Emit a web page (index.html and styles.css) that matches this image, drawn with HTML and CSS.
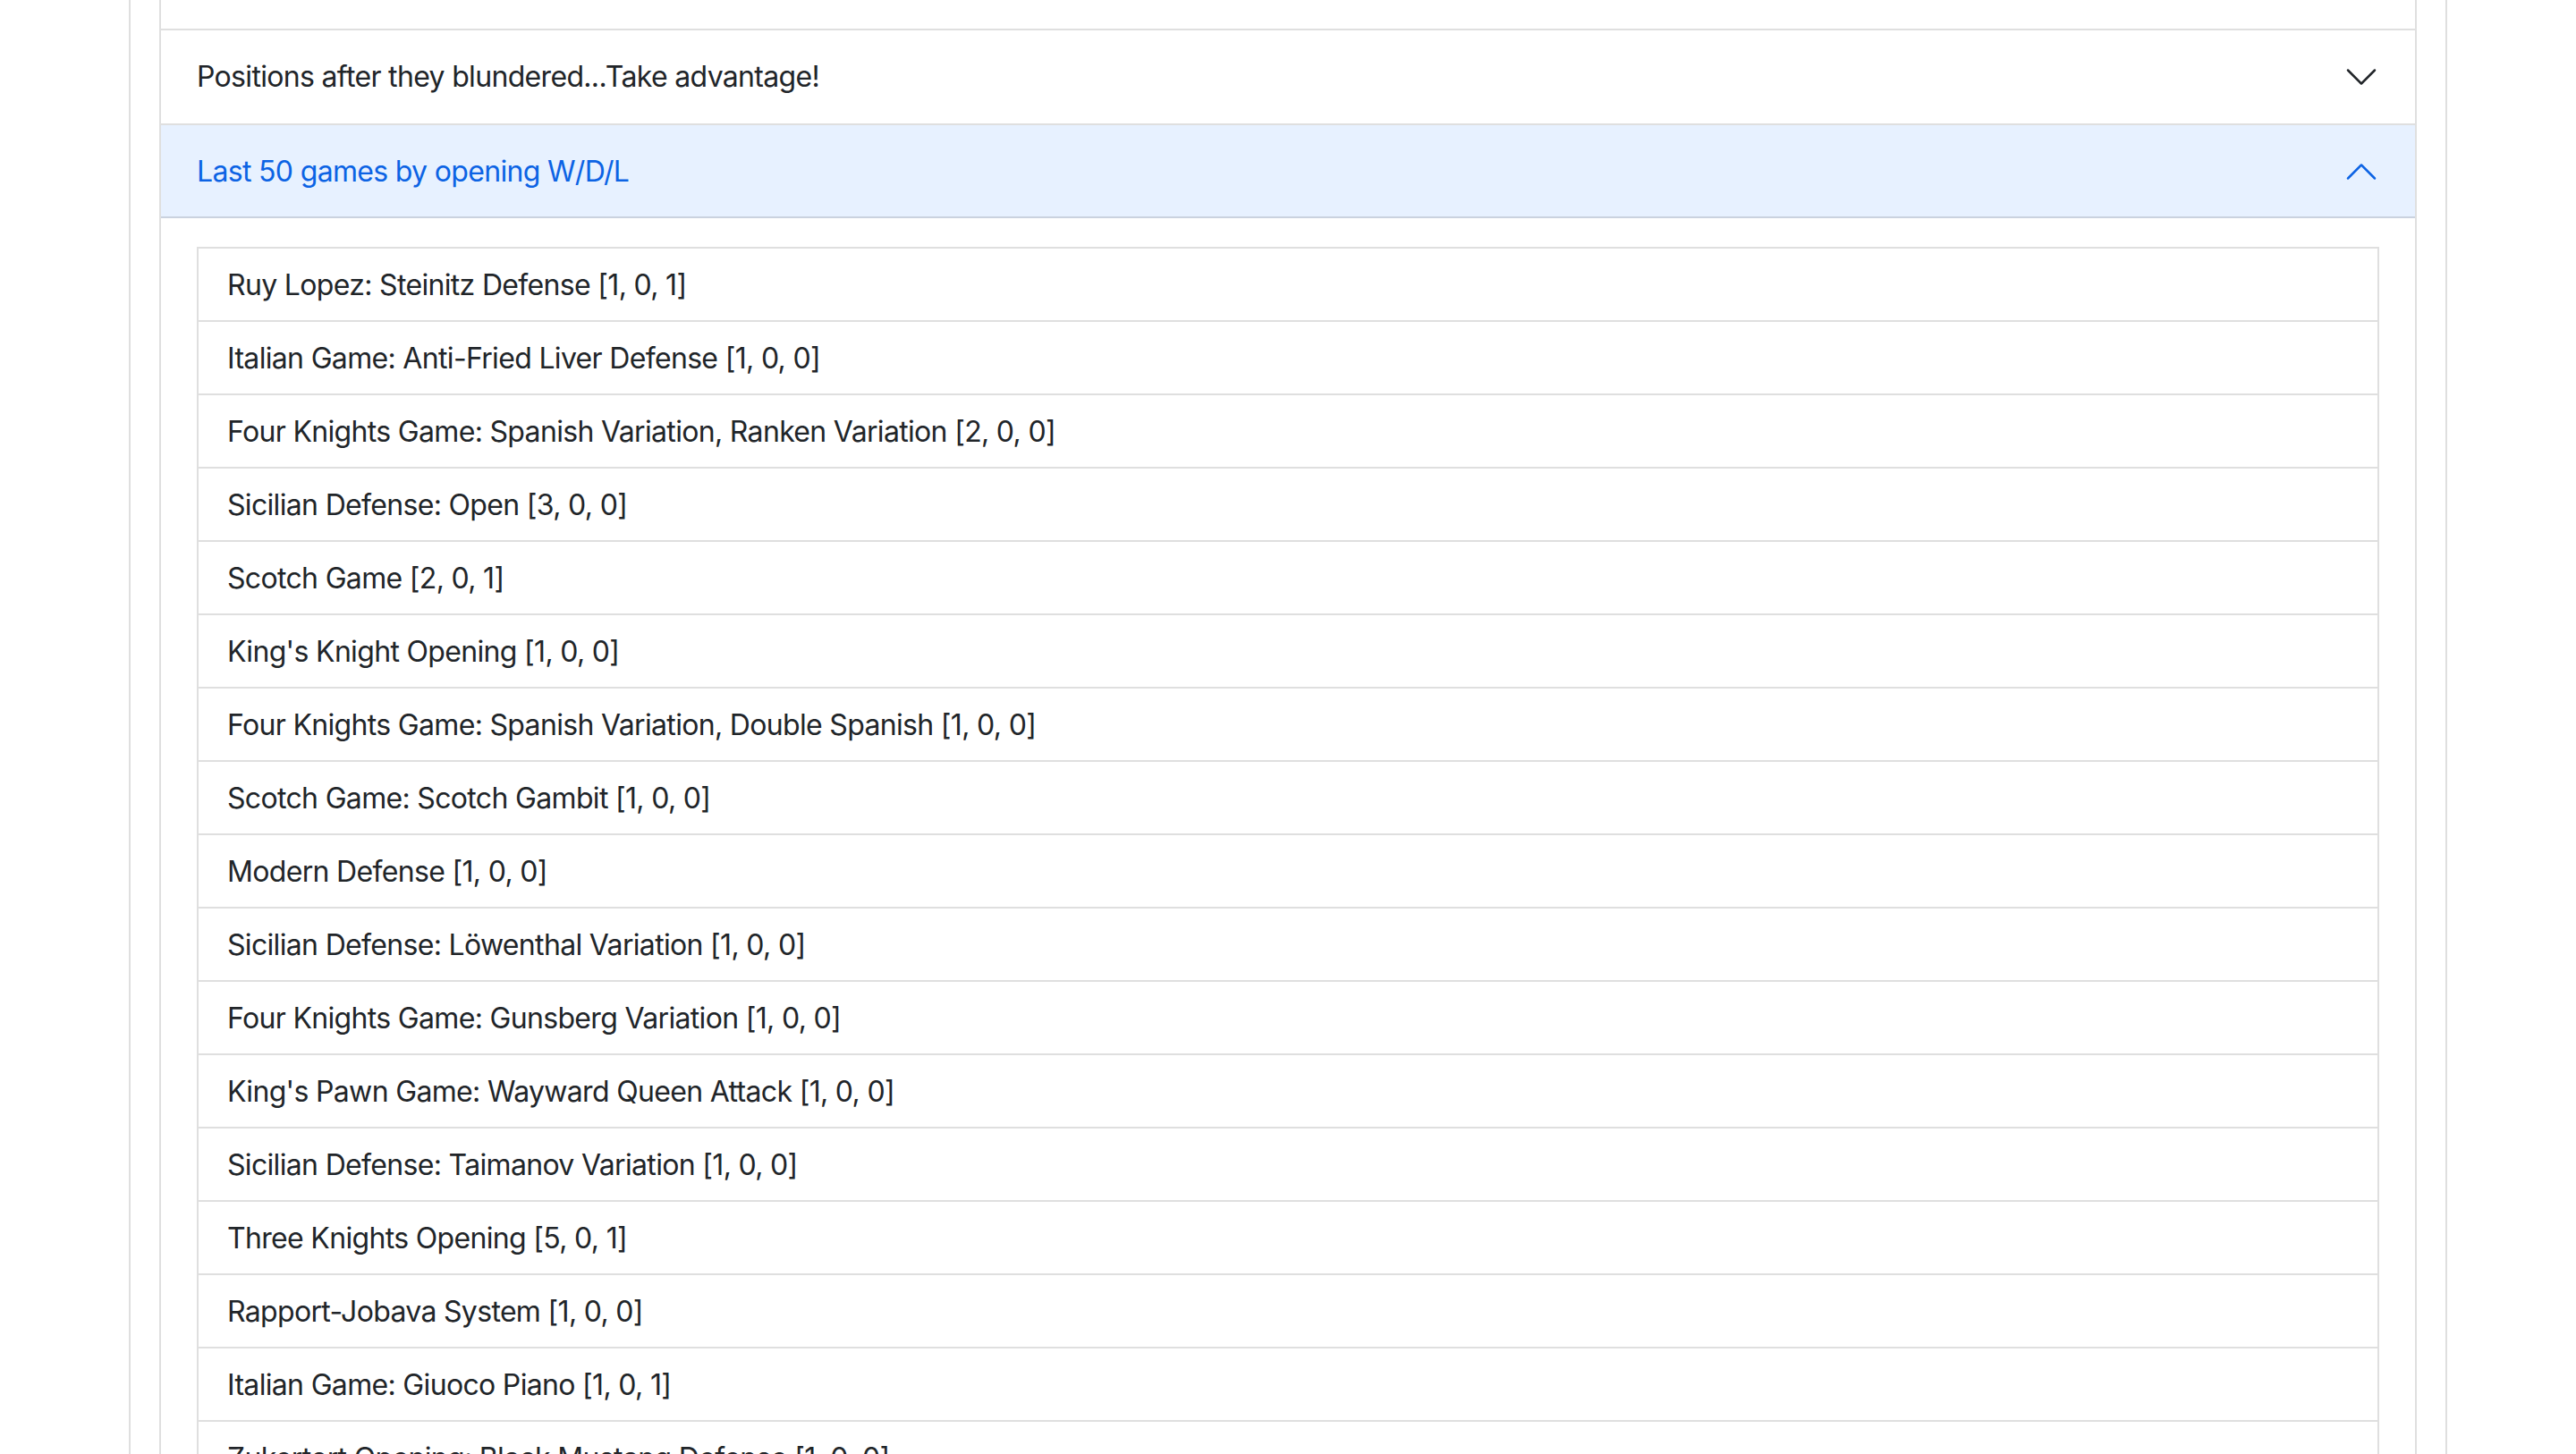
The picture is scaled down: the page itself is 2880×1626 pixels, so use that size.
FILE: index.html
```html
<!DOCTYPE html>
<html lang="en">
<head>
<meta charset="utf-8">
<title>Openings</title>
<link rel="stylesheet" href="styles.css">
</head>
<body>
<div class="page">
  <div class="accordion">
    <div class="acc-item acc-stub"></div>
    <div class="acc-item">
      <button class="acc-btn">
        <span class="acc-title">Positions after they blundered...Take advantage!</span>
        <svg class="acc-icon" viewBox="0 0 16 16"><path fill="#212529" fill-rule="evenodd" d="M1.646 4.646a.5.5 0 0 1 .708 0L8 10.293l5.646-5.647a.5.5 0 0 1 .708.708l-6 6a.5.5 0 0 1-.708 0l-6-6a.5.5 0 0 1 0-.708z"/></svg>
      </button>
    </div>
    <div class="acc-item">
      <button class="acc-btn active">
        <span class="acc-title">Last 50 games by opening W/D/L</span>
        <svg class="acc-icon up" viewBox="0 0 16 16"><path fill="#0c63e4" fill-rule="evenodd" d="M1.646 4.646a.5.5 0 0 1 .708 0L8 10.293l5.646-5.647a.5.5 0 0 1 .708.708l-6 6a.5.5 0 0 1-.708 0l-6-6a.5.5 0 0 1 0-.708z"/></svg>
      </button>
      <div class="acc-body">
        <ul class="list-group">
          <li class="list-item">Ruy Lopez: Steinitz Defense [1, 0, 1]</li>
          <li class="list-item">Italian Game: Anti-Fried Liver Defense [1, 0, 0]</li>
          <li class="list-item">Four Knights Game: Spanish Variation, Ranken Variation [2, 0, 0]</li>
          <li class="list-item">Sicilian Defense: Open [3, 0, 0]</li>
          <li class="list-item">Scotch Game [2, 0, 1]</li>
          <li class="list-item">King's Knight Opening [1, 0, 0]</li>
          <li class="list-item">Four Knights Game: Spanish Variation, Double Spanish [1, 0, 0]</li>
          <li class="list-item">Scotch Game: Scotch Gambit [1, 0, 0]</li>
          <li class="list-item">Modern Defense [1, 0, 0]</li>
          <li class="list-item">Sicilian Defense: Löwenthal Variation [1, 0, 0]</li>
          <li class="list-item">Four Knights Game: Gunsberg Variation [1, 0, 0]</li>
          <li class="list-item">King's Pawn Game: Wayward Queen Attack [1, 0, 0]</li>
          <li class="list-item">Sicilian Defense: Taimanov Variation [1, 0, 0]</li>
          <li class="list-item">Three Knights Opening [5, 0, 1]</li>
          <li class="list-item">Rapport-Jobava System [1, 0, 0]</li>
          <li class="list-item">Italian Game: Giuoco Piano [1, 0, 1]</li>
          <li class="list-item">Zukertort Opening: Black Mustang Defense [1, 0, 0]</li>
        </ul>
      </div>
    </div>
  </div>
</div>
</body>
</html>
```

FILE: styles.css
```css
* { box-sizing: border-box; }

html, body {
  margin: 0;
  padding: 0;
  background: #fff;
}

body {
  font-family: Inter, "Noto Sans", "Liberation Sans", sans-serif;
  font-size: 32px;
  line-height: 48px;
  letter-spacing: -0.021em;
  color: #212529;
}

.page {
  width: 2592px;
  margin: 0 auto;
  padding: 0 32px;
  border-left: 2px solid #dfdfdf;
  border-right: 2px solid #dfdfdf;
  min-height: 1626px;
}

.accordion {
  display: flex;
  flex-direction: column;
}

.acc-item {
  border: 2px solid #dfdfdf;
  border-top: 0;
  background: #fff;
}

.acc-stub {
  height: 34px;
}

.acc-btn {
  display: flex;
  align-items: center;
  width: 100%;
  padding: 28px 40px;
  border: 0;
  background: #fff;
  font: inherit;
  letter-spacing: inherit;
  color: #212529;
  text-align: left;
}

.acc-btn.active {
  background: #e7f1ff;
  color: #0c63e4;
  box-shadow: inset 0 -2px 0 rgba(0, 0, 0, 0.125);
}

.acc-title {
  flex: 1;
}

.acc-icon {
  width: 40px;
  height: 40px;
  flex-shrink: 0;
}

.acc-icon.up {
  transform: rotate(180deg);
}

.acc-body {
  padding: 32px 40px;
}

.list-group {
  list-style: none;
  margin: 0;
  padding: 0;
  display: flex;
  flex-direction: column;
}

.list-item {
  padding: 17px 32px 15px;
  border: 2px solid #dfdfdf;
  border-top: 0;
}

.list-item:first-child {
  border-top: 2px solid #dfdfdf;
}
```
